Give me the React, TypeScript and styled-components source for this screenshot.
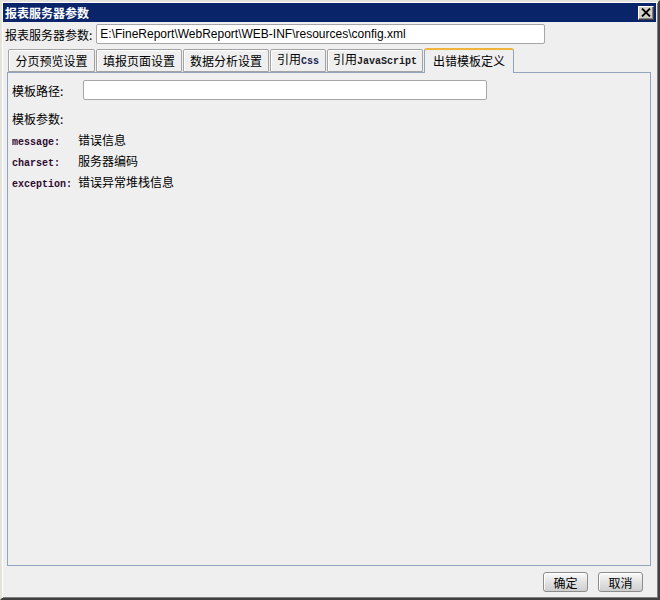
import React from "react";
import styled, { createGlobalStyle } from "styled-components";

const Global = createGlobalStyle`
  html, body { margin: 0; padding: 0; background: #efefef; }
  body { font-family: "Noto Sans CJK SC", "Liberation Sans", sans-serif; font-size: 12px; color: #000; }
  * { box-sizing: border-box; }
`;

const Window = styled.div`
  width: 660px;
  height: 600px;
  display: flex;
  flex-direction: column;
  background: #efefef;
  border: 2px solid;
  border-color: #e4e2dc #404040 #404040 #e4e2dc;
  box-shadow: inset 1px 1px 0 #ffffff, inset -1px -1px 0 #808080;
  padding: 1px 2px 2px 1px;
`;

const TitleBar = styled.div`
  height: 19px;
  background: #0a246a;
  display: flex;
  align-items: center;
  justify-content: space-between;
  padding: 0 2px 0 2px;
`;

const TitleText = styled.span`
  color: #fff;
  font-weight: bold;
  font-size: 12px;
  line-height: 19px;
`;

const CloseBtn = styled.button`
  width: 16px;
  height: 14px;
  padding: 0;
  margin: 0;
  background: #d4d0c8;
  border: 1px solid;
  border-color: #ffffff #404040 #404040 #ffffff;
  box-shadow: inset -1px -1px 0 #808080;
  display: flex;
  align-items: center;
  justify-content: center;
`;

const Body = styled.div`
  flex: 1;
  display: flex;
  flex-direction: column;
  padding: 1px 5px 0 2px;
`;

const FieldRow = styled.div`
  display: flex;
  align-items: center;
  gap: 4px;
  height: 22px;
`;

const Label = styled.span`
  font-size: 12px;
  white-space: nowrap;
`;

const TextBox = styled.div<{ $w: number }>`
  width: ${(p) => p.$w}px;
  height: 20px;
  background: #fff;
  border: 1px solid #a6a6a6;
  border-radius: 2px;
  font-family: "Liberation Sans", Arial, sans-serif;
  font-size: 12px;
  line-height: 18px;
  padding: 0 3px;
  white-space: nowrap;
  overflow: hidden;
`;

const Tabs = styled.div`
  display: flex;
  align-items: flex-end;
  gap: 1px;
  margin: 2px 0 0 3px;
  height: 25px;
  position: relative;
  z-index: 1;
`;

const Tab = styled.div<{ $active?: boolean; $w: number }>`
  width: ${(p) => p.$w}px;
  height: ${(p) => (p.$active ? 25 : 23)}px;
  margin-bottom: ${(p) => (p.$active ? -1 : 0)}px;
  display: flex;
  align-items: center;
  justify-content: center;
  font-size: 12px;
  white-space: nowrap;
  background: #efefef;
  border: 1px solid ${(p) => (p.$active ? "#94a4bf" : "#a3a3a3")};
  border-bottom: ${(p) => (p.$active ? "none" : "1px solid #a3a3a3")};
  border-top: ${(p) => (p.$active ? "2px solid #f0b43a" : "1px solid #a3a3a3")};
  border-radius: ${(p) => (p.$active ? "3px 3px 0 0" : "2px 2px 0 0")};
  box-shadow: ${(p) => (p.$active ? "none" : "inset 1px 1px 0 #ffffff")};
  padding-bottom: ${(p) => (p.$active ? 2 : 0)}px;
`;

const TabLabel = styled.span`
  line-height: 16px;
`;

const Mono = styled.span<{ $c?: string }>`
  font-family: "Liberation Mono", "Courier New", monospace;
  font-size: 10px;
  font-weight: bold;
  color: ${(p) => p.$c || "#1a1a22"};
`;

const Panel = styled.div`
  flex: 1;
  margin-left: 2px;
  border: 1px solid #94a4bf;
  display: flex;
  flex-direction: column;
  padding: 7px 4px 0 4px;
`;

const PathRow = styled.div`
  display: flex;
  align-items: center;
  height: 20px;
`;

const PathLabel = styled.span`
  width: 71px;
  font-size: 12px;
`;

const SectionLabel = styled.div`
  margin-top: 9px;
  height: 20px;
  line-height: 20px;
  font-size: 12px;
`;

const ParamGrid = styled.div`
  display: grid;
  grid-template-columns: minmax(66px, max-content) 1fr;
  grid-auto-rows: 21px;
  align-items: baseline;
`;

const ParamKey = styled.span`
  font-family: "Liberation Mono", "Courier New", monospace;
  font-size: 10px;
  font-weight: bold;
  line-height: 21px;
  color: #2e0a30;
  white-space: nowrap;
`;

const ParamValue = styled.span`
  font-size: 12px;
  line-height: 21px;
`;

const Footer = styled.div`
  display: flex;
  justify-content: flex-end;
  gap: 10px;
  padding: 6px 8px 0 0;
  height: 30px;
`;

const Button = styled.button`
  width: 45px;
  height: 20px;
  padding: 0;
  font-family: "Noto Sans CJK SC", sans-serif;
  font-size: 12px;
  color: #000;
  border: 1px solid #8c8c8c;
  border-radius: 3px;
  background: linear-gradient(#fafafa, #e2e2e2 50%, #cfcfcf);
  box-shadow: inset 1px 1px 0 #ffffff;
`;

const params = [
  { k: "message:", v: "错误信息" },
  { k: "charset:", v: "服务器编码" },
  { k: "exception:", v: "错误异常堆栈信息" },
];

export default function App() {
  return (
    <>
      <Global />
      <Window>
        <TitleBar>
          <TitleText>报表服务器参数</TitleText>
          <CloseBtn aria-label="close">
            <svg width="10" height="9" viewBox="0 0 10 9">
              <path d="M1 0.5 L9 8.5 M9 0.5 L1 8.5" stroke="#000" strokeWidth="1.8" />
            </svg>
          </CloseBtn>
        </TitleBar>
        <Body>
          <FieldRow>
            <Label>报表服务器参数:</Label>
            <TextBox $w={449}>E:\FineReport\WebReport\WEB-INF\resources\config.xml</TextBox>
          </FieldRow>
          <Tabs>
            <Tab $w={87}>
              <TabLabel>分页预览设置</TabLabel>
            </Tab>
            <Tab $w={86}>
              <TabLabel>填报页面设置</TabLabel>
            </Tab>
            <Tab $w={86}>
              <TabLabel>数据分析设置</TabLabel>
            </Tab>
            <Tab $w={56}>
              <TabLabel>
                引用<Mono $c="#1a2050">Css</Mono>
              </TabLabel>
            </Tab>
            <Tab $w={96}>
              <TabLabel>
                引用<Mono>JavaScript</Mono>
              </TabLabel>
            </Tab>
            <Tab $w={90} $active>
              <TabLabel>出错模板定义</TabLabel>
            </Tab>
          </Tabs>
          <Panel>
            <PathRow>
              <PathLabel>模板路径:</PathLabel>
              <TextBox $w={404} />
            </PathRow>
            <SectionLabel>模板参数:</SectionLabel>
            <ParamGrid>
              {params.map((p) => (
                <React.Fragment key={p.k}>
                  <ParamKey>{p.k}</ParamKey>
                  <ParamValue>{p.v}</ParamValue>
                </React.Fragment>
              ))}
            </ParamGrid>
          </Panel>
          <Footer>
            <Button>确定</Button>
            <Button>取消</Button>
          </Footer>
        </Body>
      </Window>
    </>
  );
}
